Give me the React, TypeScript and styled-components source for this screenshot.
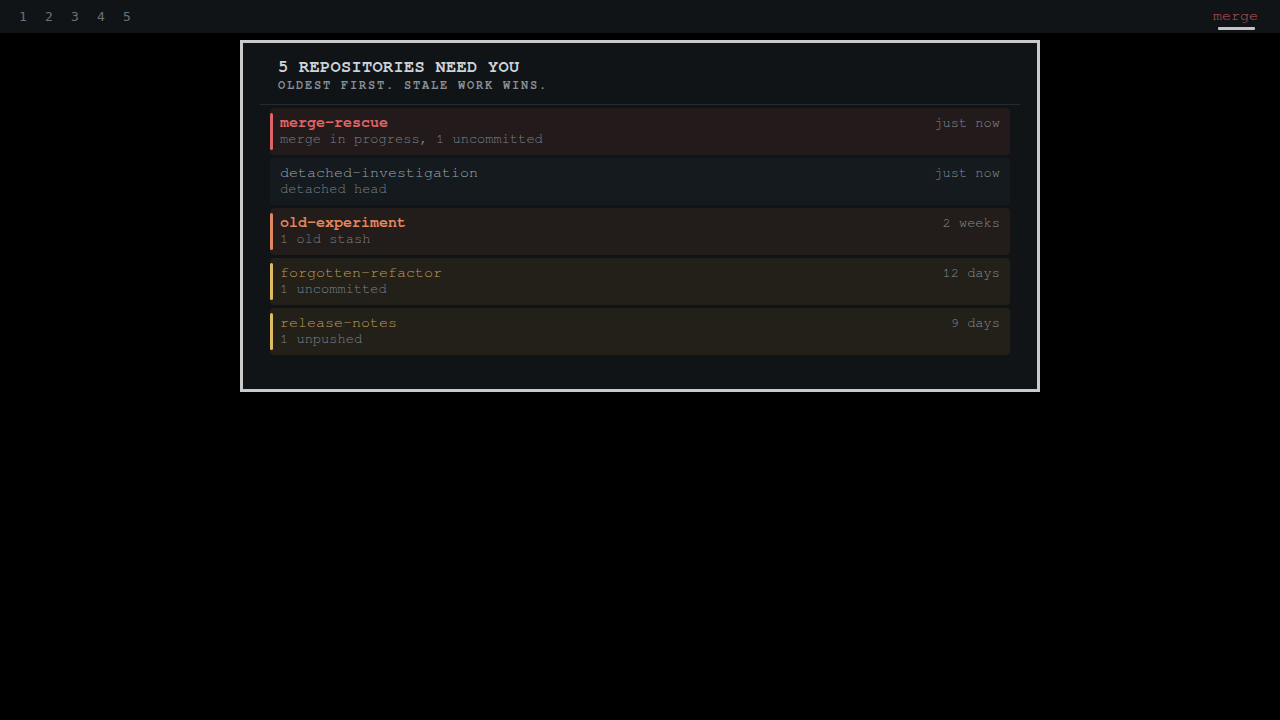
import React from "react";
import styled, { createGlobalStyle } from "styled-components";

const Global = createGlobalStyle`
  html, body { margin: 0; padding: 0; background: #000; }
  body { font-family: "FreeMono", "Liberation Mono", monospace; }
  * { box-sizing: border-box; }
`;

const TopBar = styled.div`
  height: 33px;
  background: #111417;
  display: flex;
  align-items: center;
  justify-content: space-between;
  padding: 0 22px 0 10px;
`;

const Tabs = styled.div`
  display: flex;
`;

const Tab = styled.span`
  width: 26px;
  text-align: center;
  font-family: "DejaVu Sans Mono", monospace;
  font-size: 13px;
  color: #6c7176;
`;

const Mode = styled.span`
  position: relative;
  align-self: flex-start;
  font-size: 15px;
  color: #c25555;
  line-height: 31px;
  &::after {
    content: "";
    position: absolute;
    left: 5px;
    right: 3px;
    bottom: 1px;
    height: 3px;
    border-radius: 1px;
    background: #c4c4c4;
  }
`;

const Panel = styled.section`
  width: 800px;
  margin: 7px auto 0;
  border: 3px solid #c9c9c9;
  background: #111417;
  padding: 14px 17px 34px;
`;

const Header = styled.header`
  padding: 0 18px 11px;
  border-bottom: 1px solid #262b2f;
`;

const Title = styled.h1`
  margin: 0;
  font-size: 17px;
  line-height: 20px;
  font-weight: bold;
  letter-spacing: 0.3px;
  color: #cdd4da;
`;

const Subtitle = styled.div`
  margin-top: 1px;
  font-size: 12px;
  line-height: 15px;
  font-weight: bold;
  letter-spacing: 1.8px;
  color: #8a9097;
`;

const List = styled.div`
  display: flex;
  flex-direction: column;
  gap: 3px;
  padding: 3px 10px 0;
`;

type Tone = "red" | "none" | "orange" | "yellow";

const bg: Record<Tone, string> = {
  red: "#231a1b",
  none: "#141a1d",
  orange: "#221c1a",
  yellow: "#23201a",
};
const accent: Record<Tone, string> = {
  red: "#dd6565",
  none: "transparent",
  orange: "#e0875e",
  yellow: "#e0bb62",
};
const nameColor: Record<Tone, string> = {
  red: "#e06565",
  none: "#9aa6ae",
  orange: "#e0875e",
  yellow: "#c09c55",
};

const Card = styled.div<{ $tone: Tone }>`
  position: relative;
  background: ${(p) => bg[p.$tone]};
  border-radius: 4px;
  padding: 7px 10px 8px;
  &::before {
    content: "";
    position: absolute;
    left: 0;
    top: 5px;
    bottom: 5px;
    width: 3px;
    border-radius: 2px;
    background: ${(p) => accent[p.$tone]};
  }
`;

const Row = styled.div`
  display: flex;
  justify-content: space-between;
  align-items: baseline;
`;

const Name = styled.span<{ $tone: Tone; $bold: boolean }>`
  font-size: 15px;
  line-height: 16px;
  font-weight: ${(p) => (p.$bold ? "bold" : "normal")};
  color: ${(p) => nameColor[p.$tone]};
`;

const Meta = styled.span`
  font-size: 13.7px;
  line-height: 16px;
  color: #878c92;
`;

const Detail = styled.div`
  font-size: 13.7px;
  line-height: 16px;
  color: #7a838b;
`;

const repos: { name: string; detail: string; meta: string; tone: Tone; bold: boolean }[] = [
  { name: "merge-rescue", detail: "merge in progress, 1 uncommitted", meta: "just now", tone: "red", bold: true },
  { name: "detached-investigation", detail: "detached head", meta: "just now", tone: "none", bold: false },
  { name: "old-experiment", detail: "1 old stash", meta: "2 weeks", tone: "orange", bold: true },
  { name: "forgotten-refactor", detail: "1 uncommitted", meta: "12 days", tone: "yellow", bold: false },
  { name: "release-notes", detail: "1 unpushed", meta: "9 days", tone: "yellow", bold: false },
];

export default function App() {
  return (
    <>
      <Global />
      <TopBar>
        <Tabs>
          {[1, 2, 3, 4, 5].map((n) => (
            <Tab key={n}>{n}</Tab>
          ))}
        </Tabs>
        <Mode>merge</Mode>
      </TopBar>
      <Panel>
        <Header>
          <Title>5 REPOSITORIES NEED YOU</Title>
          <Subtitle>OLDEST FIRST. STALE WORK WINS.</Subtitle>
        </Header>
        <List>
          {repos.map((r) => (
            <Card key={r.name} $tone={r.tone}>
              <Row>
                <Name $tone={r.tone} $bold={r.bold}>{r.name}</Name>
                <Meta>{r.meta}</Meta>
              </Row>
              <Detail>{r.detail}</Detail>
            </Card>
          ))}
        </List>
      </Panel>
    </>
  );
}
